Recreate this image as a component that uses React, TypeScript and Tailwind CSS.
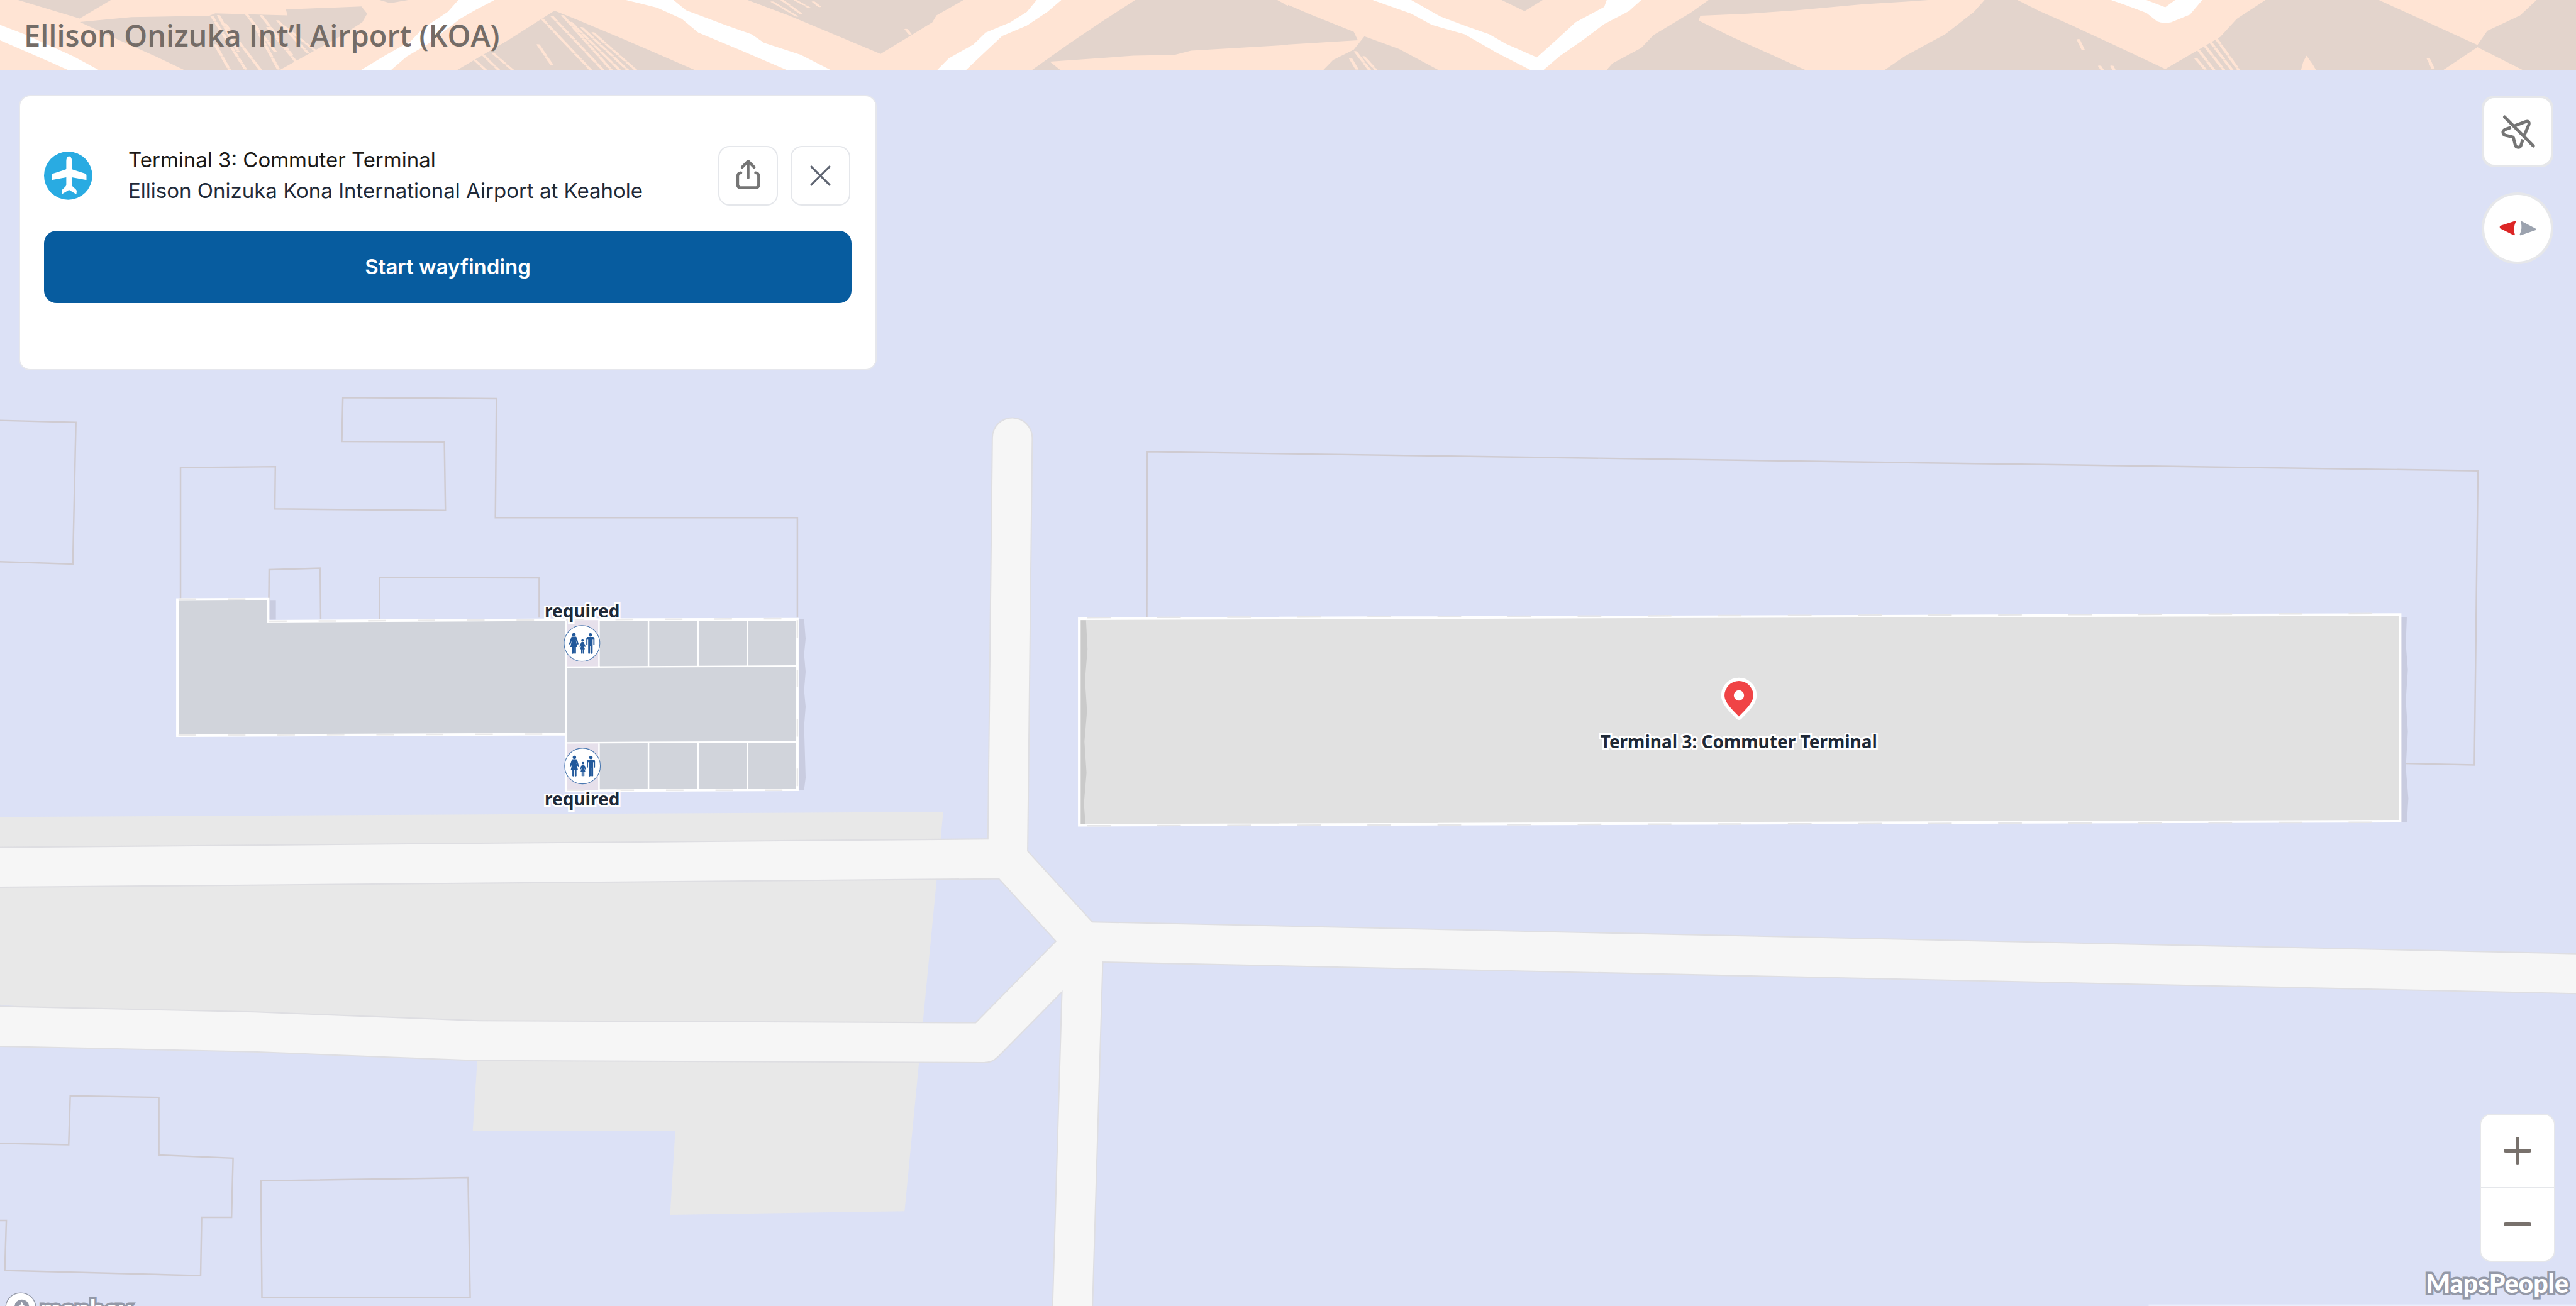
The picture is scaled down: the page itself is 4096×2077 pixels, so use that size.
import type { ReactNode } from 'react';

const ROADS = [
    'M1965 850 L1956 1666',
    'M-50 1684 L1956 1667 L2103 1828',
    'M2103 1828 L5050 1891',
    'M2103 1828 L2080 2600',
    'M-50 1991 L494 2003 L928 2020 L1910 2024 L2103 1828',
];

const OUTLINES = [
    'M351 1163 V908 L535 906 L534 988 L865 991 L863 858 L664 857 L666 772 L964 774 L962 1005 H1548 V1199',
    'M522 1200 L523 1106 L622 1103 L623 1202',
    'M737 1202 V1121 L1047 1122 V1199',
    'M2226 1200 L2227 877 L4809 914 L4802 1485 L4668 1482',
    'M-10 816 L148 820 L142 1095 L-10 1090',
    'M-10 2219 L134 2222 L137 2127 L309 2130 V2242 L453 2248 L450 2363 H392 L390 2476 L10 2466 L13 2369 H-10',
    'M507 2292 L909 2286 L913 2519 H509 Z',
];

// brush strokes over the dark parts of the banner: x1, y1, x2, y2
const BRUSH_LEFT = [
    [258, 95, 300, 413], [266, 90, 290, 300], [274, 140, 318, 413], [262, 260, 280, 413],
    [298, 70, 335, 300], [308, 130, 340, 413], [318, 90, 355, 320], [326, 160, 362, 370],
    [338, 120, 375, 310], [345, 150, 385, 300], [578, 350, 592, 413], [588, 320, 608, 413],
    [600, 310, 625, 413], [655, 260, 672, 380], [660, 110, 720, 413], [672, 95, 735, 413],
    [685, 90, 745, 413], [695, 130, 755, 413], [708, 160, 765, 413], [722, 190, 775, 413],
    [940, 10, 970, 95], [952, 0, 975, 80], [968, 0, 985, 45], [990, 10, 998, 40], [1103, 170, 1108, 200],
];
const BRUSH_RIGHT = [
    [76, 340, 85, 413], [82, 300, 100, 413], [92, 330, 108, 413], [962, 230, 968, 290],
    [988, 385, 992, 413], [1003, 385, 1006, 413], [1108, 290, 1128, 413], [1115, 260, 1140, 413],
    [1123, 245, 1150, 413], [1130, 225, 1158, 413], [1105, 340, 1118, 413], [1388, 340, 1394, 400],
];

function Brush({ lines }: { lines: number[][] }) {
    return (
        <g stroke="#ffe4d4" strokeWidth="4" strokeLinecap="round" strokeDasharray="30 5">
            {lines.map(([x1, y1, x2, y2]) => (
                <line key={`${x1}-${y1}`} x1={x1} y1={y1} x2={x2} y2={y2} />
            ))}
        </g>
    );
}

function BannerPattern() {
    return (
        <svg className="absolute inset-0 h-full w-full" viewBox="0 0 5000 137" preserveAspectRatio="none" aria-hidden="true">
            <rect width="5000" height="137" fill="#ffe4d4" />
            <g transform="scale(1.5944 0.3333)">
                <g fill="#e3d4cc">
                    <path d="M22 0H135L97 108Z" />
                    <path d="M97 128L160 100L255 92L262 78L350 90L348 55L440 38L447 80L441 130L415 210L340 410H225L190 330L150 245Z" />
                    <path d="M462 0H497L475 18Z" />
                    <path d="M675 62L620 230L555 413H848L760 230L700 110Z" />
                    <path d="M910 0H1173L1140 90L1135 130L1072 315L1020 210L960 90Z" />
                    <path d="M1382 0H1555L1568 35V262L1450 295L1430 320L1380 325L1278 360L1292 413H1255L1300 260L1340 130Z" />
                </g>
                <Brush lines={BRUSH_LEFT} />
                <g fill="#fff">
                    <path d="M0 145V235L60 360L85 413H122L90 330L30 200Z" />
                    <path d="M558 0H602L580 55L560 110L520 260L495 330L475 413H438L470 320L500 240L515 165L545 70Z" />
                    <path d="M762 0H820L835 60L885 150L915 200L930 250L975 320L1013 413H960L900 290L850 190L830 110L800 45Z" />
                    <path d="M1262 0H1292L1275 70L1250 150L1220 210L1200 300L1175 413H1140L1155 340L1185 260L1200 190L1230 130L1250 70Z" />
                </g>
            </g>
            <g transform="translate(2500 0) scale(1.5944 0.3333)">
                <g fill="#e3d4cc">
                    <path d="M0 28L30 90L80 185L85 235L0 260Z" />
                    <path d="M93 212L135 285L185 413H42L55 350L80 290Z" />
                    <path d="M260 0H310L288 65Z" />
                    <path d="M512 0H780L750 10L700 25L620 60L560 80L502 92L500 120L540 215L575 290L632 413H387L395 370L430 280L445 205L490 75Z" />
                    <path d="M848 0H888L915 65L955 150L1000 250L1068 403L1105 300L1135 215L1155 110L1190 0H1328L1448 262L1460 180L1500 90L1520 0H1568V413H1505L1448 275L1405 413H725L750 330L800 200L835 70Z" />
                </g>
                <Brush lines={BRUSH_RIGHT} />
                <path d="M1240 325L1248 380L1252 413H1233L1236 360Z" fill="#ffe4d4" />
                <g fill="#fff">
                    <path d="M103 0H150L185 95L215 150L245 200L265 255L303 335L325 240L350 130L385 40L388 0H430L415 65L385 140L360 230L330 330L310 413H297L255 310L215 200L175 145L150 80Z" />
                    <path d="M1002 0H1045L1068 42L1080 0H1113L1098 85L1075 130Q1065 140 1058 125L1045 75L1020 30Z" />
                </g>
            </g>
        </svg>
    );
}

function FamilyMarker({ x, y }: { x: number; y: number }) {
    return (
        <g transform={`translate(${x} ${y}) scale(0.3333)`}>
            <circle r="104" fill="#fff" stroke="#4a78b0" strokeWidth="4" />
            <g fill="#22599b">
                <circle cx="-47" cy="-50" r="10" />
                <path d="M-57 -39H-37Q-33 -39 -31 -34L-20 2Q-22 9 -27 5L-36 -20L-27 21H-35V58Q-40 63 -45 58V22H-49V58Q-54 63 -59 58V21H-68L-58 -20L-67 5Q-73 9 -75 2L-63 -34Q-61 -39 -57 -39Z" />
                <circle cx="3" cy="-17" r="7" />
                <path d="M-3 -8H9L21 17Q19 23 14 18L10 12L17 34H11V58Q7 62 4 58V35H2V58Q-2 62 -5 58V34H-12L-4 12L-9 18Q-14 23 -15 17Z" />
                <circle cx="49" cy="-49" r="10" />
                <path d="M33 -37H65Q73 -36 73 -28V7Q69 12 66 7V-22H62V58Q56 64 51 58V14H47V58Q41 64 36 58V-22H32V7Q29 12 25 7V-28Q26 -36 33 -37Z" />
            </g>
        </g>
    );
}

function MapCanvas() {
    return (
        <svg className="h-full w-full" viewBox="0 137 5000 2398" preserveAspectRatio="xMidYMid slice" role="img" aria-label="Airport map">
            <rect y="137" width="5000" height="2398" fill="#dce1f6" />
            <path d="M0 1586L1831 1576L1756 2351L1301 2358L1311 2195H918L928 2040L0 1950Z" fill="#e8e8e8" />

            <g fill="none" stroke="#cfcbd1" strokeWidth="3">
                {OUTLINES.map(d => (
                    <path key={d} d={d} />
                ))}
            </g>

            <g fill="none" strokeLinecap="round" strokeLinejoin="round">
                <g stroke="#dedee2" strokeWidth="80">
                    {ROADS.map(d => (
                        <path key={d} d={d} />
                    ))}
                </g>
                <g stroke="#f6f6f6" strokeWidth="75">
                    {ROADS.map(d => (
                        <path key={d} d={d} />
                    ))}
                </g>
            </g>

            {/* West building */}
            <path d="M523 1166H536V1203H523Z M1549 1202H1561L1564 1240L1561 1270L1564 1304L1561 1340L1564 1372L1561 1410L1564 1510L1561 1533H1549Z" fill="#c9cce0" />
            <path d="M345 1164L521 1163V1206L1099 1203L1548 1202V1533L1099 1535V1425L345 1428Z" fill="#d1d4db" stroke="#fff" strokeWidth="5" />
            <path d="M1099 1204H1163V1295H1099Z M1099 1442H1163V1533H1099Z" fill="#e6e0eb" />
            <path
                d="M1099 1203V1535 M1163 1203V1295 M1259 1203V1295 M1355 1203V1294 M1451 1202V1293 M1163 1442V1533 M1259 1442V1533 M1355 1441V1533 M1451 1440V1533 M1099 1295L1548 1293 M1099 1442L1548 1440"
                fill="none"
                stroke="#fff"
                strokeWidth="3"
            />
            <path d="M347 1163H519 M523 1206L1099 1203L1548 1201 M347 1427L1099 1425 M1548 1204V1530 M1101 1534H1548" fill="none" stroke="#ebeaea" strokeWidth="3" strokeDasharray="34 62" />

            {/* Commuter terminal */}
            <path d="M4660 1198H4671L4669 1250L4673 1300L4669 1360L4673 1420L4669 1490L4674 1550L4671 1596H4660Z" fill="#c9cce0" />
            <path d="M2095 1201L4658 1193V1594L2095 1602Z" fill="#e1e1e1" stroke="#fff" strokeWidth="5" />
            <path d="M2098 1204H2108L2111 1260L2106 1320L2110 1380L2105 1440L2109 1500L2104 1560L2107 1600H2098Z" fill="#cacaca" />
            <path d="M2110 1199L4656 1191 M2110 1603L4656 1596" fill="none" stroke="#e6e6e8" strokeWidth="3" strokeDasharray="46 90" />

            <FamilyMarker x={1130} y={1249} />
            <FamilyMarker x={1131} y={1487} />

            <path
                d="M3375 1391C3366 1381 3347 1365 3347 1350A28 28 0 0 1 3403 1350C3403 1365 3384 1381 3375 1391Z"
                fill="#f04446"
                stroke="#fff"
                strokeWidth="13"
                strokeLinejoin="round"
                paintOrder="stroke"
            />
            <circle cx="3375" cy="1350" r="10" fill="#fff" />
            <rect x="4170" y="2532" width="830" height="3" fill="#eaeefc" />
        </svg>
    );
}

function MapLabel({ className, children }: { className: string; children: ReactNode }) {
    return (
        <span
            className={`absolute -translate-x-1/2 font-['Noto_Sans',sans-serif] text-[28px] leading-7 font-bold whitespace-nowrap text-[#1f2937] [paint-order:stroke_fill] [-webkit-text-stroke:6px_#fff] ${className}`}
        >
            {children}
        </span>
    );
}

function PlaceCard() {
    return (
        <section className="absolute top-[41px] left-8 w-[1360px] rounded-[16px] bg-white px-[38px] pt-[77px] pb-[105px] ring-2 ring-[#e6e7ec]">
            <div className="flex items-center">
                <svg className="size-[77px] shrink-0" viewBox="0 0 283 283" aria-hidden="true">
                    <circle cx="141" cy="141" r="141" fill="#29abe2" />
                    <path
                        d="M146 28C156 28 162 38 163 55V99Q164 104 169 106L240 129Q248 132 248 138V166L163 151V193Q163 200 168 205L187 222Q191 226 191 231L189 250L146 224L103 250V231Q103 226 107 222L125 205Q130 200 130 193V151L45 166V138Q45 132 53 129L124 106Q129 104 130 99V55C131 38 137 28 146 28Z"
                        fill="#fff"
                    />
                </svg>
                <div className="ml-[57px] flex-1 text-[33px] leading-[49px]">
                    <h2 className="text-[#1c1917]">Terminal 3: Commuter Terminal</h2>
                    <p className="text-[#1f2937]">Ellison Onizuka Kona International Airport at Keahole</p>
                </div>
                <div className="flex gap-5 pr-0.5">
                    <button type="button" aria-label="Share" className="size-[95px] rounded-[18px] border-2 border-gray-200">
                        <svg className="h-full w-full" viewBox="4 4 340 340" fill="none" stroke="#757575" strokeWidth="17" strokeLinecap="round" strokeLinejoin="round">
                            <path d="M174 86V187M139 123L174 87L210 123M131 156Q112 158 112 178V225Q112 245 132 245H217Q237 245 237 225V178Q237 158 219 156" />
                        </svg>
                    </button>
                    <button type="button" aria-label="Close" className="size-[95px] rounded-[18px] border-2 border-gray-200">
                        <svg className="h-full w-full" viewBox="4 4 340 340" fill="none" stroke="#5f6572" strokeWidth="12" strokeLinecap="round">
                            <path d="M120 120L228 228M228 120L120 228" />
                        </svg>
                    </button>
                </div>
            </div>
            <button type="button" className="mt-[39px] h-[115px] w-full rounded-[20px] bg-[#075c9f] text-[33px] leading-[49px] font-semibold text-white">
                Start wayfinding
            </button>
        </section>
    );
}

function MapControls() {
    return (
        <div className="absolute top-11 right-[35px] bottom-[72px] flex flex-col items-center justify-between">
            <div className="flex flex-col gap-12">
                <button type="button" aria-label="Show my position" className="size-[106px] rounded-2xl bg-white ring-4 ring-[#e6e7ea]">
                    <svg className="h-full w-full" viewBox="0 0 389 389" fill="none" stroke="#757575" strokeWidth="18" strokeLinecap="round" strokeLinejoin="round">
                        <path d="M119 110L287 279" />
                        <path d="M174 163L240 138Q266 130 261 154L234 217" strokeLinecap="butt" />
                        <path d="M156 171L125 182Q108 189 110 202Q112 214 124 217L164 226Q170 227 171 233L182 276Q186 287 198 287Q210 287 214 277L226 241" strokeLinecap="butt" />
                    </svg>
                </button>
                <button type="button" aria-label="Reset north" className="size-[106px] rounded-full bg-white ring-4 ring-[#e6e7ea]">
                    <svg className="h-full w-full" viewBox="0 0 389 389" strokeWidth="8" strokeLinejoin="round">
                        <path d="M95 184L180 156Q163 196 175 232L95 192Z" fill="#dc2626" stroke="#dc2626" />
                        <path d="M218 158L297 199V203L211 232Q229 196 218 158Z" fill="#9ca3af" stroke="#9ca3af" />
                    </svg>
                </button>
            </div>
            <div className="flex w-[116px] flex-col divide-y-2 divide-gray-200 rounded-2xl bg-white ring-2 ring-[#e6e7ea]">
                <button type="button" aria-label="Zoom in" className="flex h-[116px] items-center justify-center">
                    <svg className="size-11" viewBox="0 0 44 44" stroke="#78716c" strokeWidth="6" strokeLinecap="round">
                        <path d="M22 3V41M3 22H41" />
                    </svg>
                </button>
                <button type="button" aria-label="Zoom out" className="flex h-[116px] items-center justify-center">
                    <svg className="size-11" viewBox="0 0 44 44" stroke="#78716c" strokeWidth="6" strokeLinecap="round">
                        <path d="M3 22H41" />
                    </svg>
                </button>
            </div>
        </div>
    );
}

export default function App() {
    return (
        <div className="flex h-screen flex-col overflow-hidden bg-[#dce1f6] font-['Inter',sans-serif]">
            <header className="relative flex h-28 shrink-0 items-center overflow-hidden px-[38px]">
                <BannerPattern />
                <h1 className="relative font-['Open_Sans',sans-serif] text-[47px] leading-none font-semibold text-[#746c67]">Ellison Onizuka Int’l Airport (KOA)</h1>
            </header>

            <main className="relative min-h-0 flex-1 overflow-hidden">
                <MapCanvas />
                <MapLabel className="top-[43%] left-[22.6%]">required</MapLabel>
                <MapLabel className="top-[58.2%] left-[22.6%]">required</MapLabel>
                <MapLabel className="top-[53.6%] left-[67.5%]">Terminal 3: Commuter Terminal</MapLabel>

                <PlaceCard />
                <MapControls />

                <a href="#mapbox" className="absolute -bottom-7 left-2 flex items-center gap-1.5 font-['Lato'] text-[41px] leading-none font-bold text-white [paint-order:stroke_fill] [-webkit-text-stroke:7px_#9499a8]">
                    <svg className="size-[50px]" viewBox="0 0 60 60" aria-hidden="true">
                        <circle cx="30" cy="30" r="28" fill="#fff" stroke="#9499a8" strokeWidth="3" />
                        <circle cx="32" cy="28" r="14" fill="#9499a8" />
                        <path d="M32 18L35 25L42 28L35 31L32 38L29 31L22 28L29 25Z" fill="#fff" />
                    </svg>
                    mapbox
                </a>
                <a href="#mapspeople" className="absolute right-3 bottom-4 font-['Lato'] text-[41px] leading-none font-black text-white [paint-order:stroke_fill] [-webkit-text-stroke:7px_#9499a8]">
                    MapsPeople
                </a>
            </main>
        </div>
    );
}
